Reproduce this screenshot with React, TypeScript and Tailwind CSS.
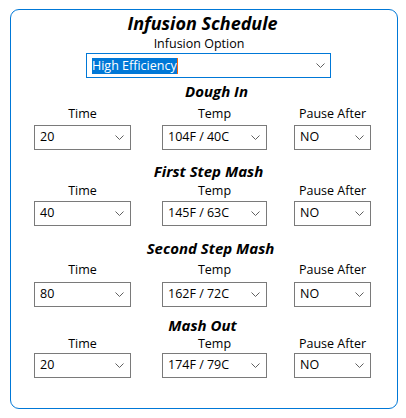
import React from "react";

type Step = {
  name: string;
  time: string;
  temp: string;
  pause: string;
  head: string;
  labels: string;
  boxes: string;
};

const steps: Step[] = [
  { name: "Dough In", time: "20", temp: "104F / 40C", pause: "NO", head: "mt-[4px] pl-[25px]", labels: "mt-[5px]", boxes: "mt-[3px]" },
  { name: "First Step Mash", time: "40", temp: "145F / 63C", pause: "NO", head: "mt-[12px] pl-[9px]", labels: "mt-[2px]", boxes: "mt-[2px]" },
  { name: "Second Step Mash", time: "80", temp: "162F / 72C", pause: "NO", head: "mt-[13px] pl-[13px]", labels: "mt-[4px]", boxes: "mt-[4px]" },
  { name: "Mash Out", time: "20", temp: "174F / 79C", pause: "NO", head: "mt-[9px] pr-[3px]", labels: "mt-[1px]", boxes: "mt-[1px]" },
];

function Chevron() {
  return (
    <svg width="9" height="5" viewBox="0 0 9 5" className="shrink-0">
      <polyline points="0.5,0.5 4.5,4.5 8.5,0.5" fill="none" stroke="#606060" strokeWidth="1" />
    </svg>
  );
}

function Combo({ value, width }: { value: string; width: string }) {
  return (
    <div className={`flex h-[25px] items-center justify-between border border-[#7a7a7a] bg-white pl-[5px] pr-[6px] ${width}`}>
      <span className="text-[12.5px] leading-none text-black">{value}</span>
      <Chevron />
    </div>
  );
}

export default function App() {
  return (
    <div className="h-[418px] w-[406px] bg-white pt-[9px] pl-[10px]" style={{ fontFamily: '"Open Sans", "Noto Sans", sans-serif' }}>
      <div className="flex h-[400px] w-[388px] flex-col rounded-[9px] border border-[#0078d7] pt-[1px]">
        <h1 className="pr-[3px] text-center text-[18px] leading-[24px] font-bold italic text-black">Infusion Schedule</h1>
        <div className="pr-[10px] text-center text-[12.5px] leading-[17px] text-black">Infusion Option</div>

        <div className="mt-[1px] ml-[75px] flex h-[25px] w-[245px] items-center justify-between border border-[#0078d7] pl-[5px] pr-[5px]">
          <span className="flex h-[16px] items-center">
            <span className="bg-[#0078d7] text-[12.5px] leading-[16px] text-white">High Efficiency</span>
            <span className="h-[16px] w-px bg-[#f7630c]" />
          </span>
          <Chevron />
        </div>

        {steps.map((s) => (
          <div key={s.name} className="flex flex-col">
            <h2 className={`text-center text-[15px] leading-[19px] font-bold italic text-black ${s.head}`}>{s.name}</h2>
            <div className={`flex pl-[23px] text-[12.5px] leading-[16px] text-black ${s.labels}`}>
              <div className="w-[97px] text-center">Time</div>
              <div className="ml-[31px] w-[105px] text-center">Temp</div>
              <div className="ml-[27px] w-[77px] text-center">Pause After</div>
            </div>
            <div className={`flex pl-[23px] ${s.boxes}`}>
              <Combo value={s.time} width="w-[97px]" />
              <div className="ml-[31px]">
                <Combo value={s.temp} width="w-[105px]" />
              </div>
              <div className="ml-[27px]">
                <Combo value={s.pause} width="w-[77px]" />
              </div>
            </div>
          </div>
        ))}
      </div>
    </div>
  );
}
